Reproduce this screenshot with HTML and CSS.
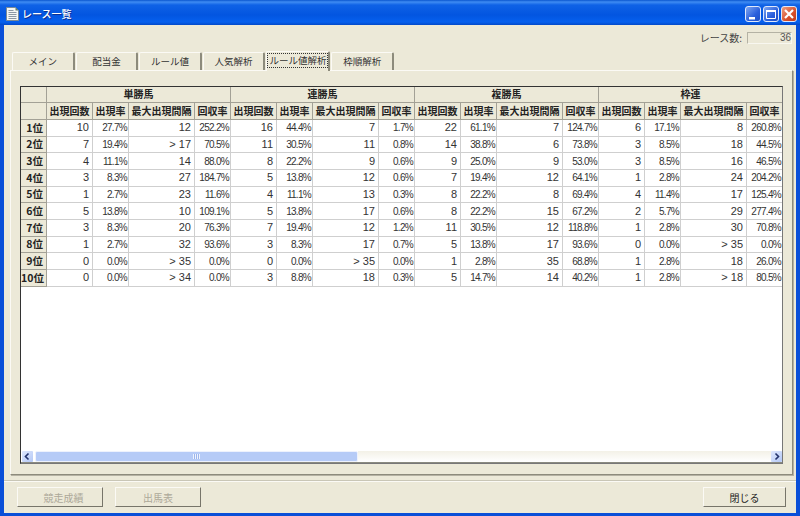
FILE: index.html
```html
<!DOCTYPE html>
<html lang="ja">
<head>
  <meta charset="UTF-8">
  <title>レース一覧</title>
  <link rel="stylesheet" href="styles.css">
</head>
<body>
  <div class="window">
    <div class="titlebar">
      <svg class="app-icon" width="13" height="14" viewBox="0 0 13 14">
        <path d="M0.500 0.500h9l3 3v10h-12z" fill="#f4f6f4" stroke="#7a8a96"/>
        <path d="M9.500 0.500v3h3z" fill="#5f7f6a"/>
        <path d="M2.500 3.500h5M2.500 5.500h8M2.500 7.500h8M2.500 9.500h8M2.500 11.500h8" stroke="#8c98a4"/>
      </svg>
      <span class="title-text">レース一覧</span>
      <div class="caption-buttons">
        <div class="cap-btn"><svg width="16" height="16" viewBox="0 0 16 16"><path d="M4 11h6v2.500H4z" fill="#fff"/></svg></div>
        <div class="cap-btn"><svg width="16" height="16" viewBox="0 0 16 16"><path d="M3.500 4.500h9v8h-9z" fill="none" stroke="#fff"/><path d="M3 4h10v2H3z" fill="#fff"/></svg></div>
        <div class="cap-btn close"><svg width="16" height="16" viewBox="0 0 16 16"><path d="M4 4l8 8M12 4l-8 8" stroke="#fff" stroke-width="2.200"/></svg></div>
      </div>
    </div>

    <div class="client">
      <div class="status-row">
        <span class="status-label">レース数:</span>
        <div class="status-box">36</div>
      </div>

      <div class="tabs">
        <div class="tab">メイン</div>
        <div class="tab">配当金</div>
        <div class="tab">ルール値</div>
        <div class="tab">人気解析</div>
        <div class="tab active"><span class="focus">ルール値解析</span></div>
        <div class="tab">枠順解析</div>
      </div>

      <div class="panel">
        <div class="grid-box">
          <div class="grid-scroll">
            <table class="grid">
              <colgroup>
                <col class="c-head">
                <col class="c-a"><col class="c-b"><col class="c-c"><col class="c-b">
                <col class="c-a"><col class="c-b"><col class="c-c"><col class="c-b">
                <col class="c-a"><col class="c-b"><col class="c-c"><col class="c-b">
                <col class="c-a"><col class="c-b"><col class="c-c"><col class="c-b">
              </colgroup>
              <thead>
                <tr class="group-row">
                  <th></th>
                  <th colspan="4">単勝馬</th>
                  <th colspan="4">連勝馬</th>
                  <th colspan="4">複勝馬</th>
                  <th colspan="4">枠連</th>
                </tr>
                <tr class="name-row">
                  <th></th>
                  <th>出現回数</th><th>出現率</th><th>最大出現間隔</th><th>回収率</th>
                  <th>出現回数</th><th>出現率</th><th>最大出現間隔</th><th>回収率</th>
                  <th>出現回数</th><th>出現率</th><th>最大出現間隔</th><th>回収率</th>
                  <th>出現回数</th><th>出現率</th><th>最大出現間隔</th><th>回収率</th>
                </tr>
              </thead>
              <tbody>
                <tr><th>1位</th>
                  <td>10</td><td class="pct">27.7%</td><td>12</td><td class="pct">252.2%</td>
                  <td>16</td><td class="pct">44.4%</td><td>7</td><td class="pct">1.7%</td>
                  <td>22</td><td class="pct">61.1%</td><td>7</td><td class="pct">124.7%</td>
                  <td>6</td><td class="pct">17.1%</td><td>8</td><td class="pct">260.8%</td></tr>
                <tr><th>2位</th>
                  <td>7</td><td class="pct">19.4%</td><td>&gt; 17</td><td class="pct">70.5%</td>
                  <td>11</td><td class="pct">30.5%</td><td>11</td><td class="pct">0.8%</td>
                  <td>14</td><td class="pct">38.8%</td><td>6</td><td class="pct">73.8%</td>
                  <td>3</td><td class="pct">8.5%</td><td>18</td><td class="pct">44.5%</td></tr>
                <tr><th>3位</th>
                  <td>4</td><td class="pct">11.1%</td><td>14</td><td class="pct">88.0%</td>
                  <td>8</td><td class="pct">22.2%</td><td>9</td><td class="pct">0.6%</td>
                  <td>9</td><td class="pct">25.0%</td><td>9</td><td class="pct">53.0%</td>
                  <td>3</td><td class="pct">8.5%</td><td>16</td><td class="pct">46.5%</td></tr>
                <tr><th>4位</th>
                  <td>3</td><td class="pct">8.3%</td><td>27</td><td class="pct">184.7%</td>
                  <td>5</td><td class="pct">13.8%</td><td>12</td><td class="pct">0.6%</td>
                  <td>7</td><td class="pct">19.4%</td><td>12</td><td class="pct">64.1%</td>
                  <td>1</td><td class="pct">2.8%</td><td>24</td><td class="pct">204.2%</td></tr>
                <tr><th>5位</th>
                  <td>1</td><td class="pct">2.7%</td><td>23</td><td class="pct">11.6%</td>
                  <td>4</td><td class="pct">11.1%</td><td>13</td><td class="pct">0.3%</td>
                  <td>8</td><td class="pct">22.2%</td><td>8</td><td class="pct">69.4%</td>
                  <td>4</td><td class="pct">11.4%</td><td>17</td><td class="pct">125.4%</td></tr>
                <tr><th>6位</th>
                  <td>5</td><td class="pct">13.8%</td><td>10</td><td class="pct">109.1%</td>
                  <td>5</td><td class="pct">13.8%</td><td>17</td><td class="pct">0.6%</td>
                  <td>8</td><td class="pct">22.2%</td><td>15</td><td class="pct">67.2%</td>
                  <td>2</td><td class="pct">5.7%</td><td>29</td><td class="pct">277.4%</td></tr>
                <tr><th>7位</th>
                  <td>3</td><td class="pct">8.3%</td><td>20</td><td class="pct">76.3%</td>
                  <td>7</td><td class="pct">19.4%</td><td>12</td><td class="pct">1.2%</td>
                  <td>11</td><td class="pct">30.5%</td><td>12</td><td class="pct">118.8%</td>
                  <td>1</td><td class="pct">2.8%</td><td>30</td><td class="pct">70.8%</td></tr>
                <tr><th>8位</th>
                  <td>1</td><td class="pct">2.7%</td><td>32</td><td class="pct">93.6%</td>
                  <td>3</td><td class="pct">8.3%</td><td>17</td><td class="pct">0.7%</td>
                  <td>5</td><td class="pct">13.8%</td><td>17</td><td class="pct">93.6%</td>
                  <td>0</td><td class="pct">0.0%</td><td>&gt; 35</td><td class="pct">0.0%</td></tr>
                <tr><th>9位</th>
                  <td>0</td><td class="pct">0.0%</td><td>&gt; 35</td><td class="pct">0.0%</td>
                  <td>0</td><td class="pct">0.0%</td><td>&gt; 35</td><td class="pct">0.0%</td>
                  <td>1</td><td class="pct">2.8%</td><td>35</td><td class="pct">68.8%</td>
                  <td>1</td><td class="pct">2.8%</td><td>18</td><td class="pct">26.0%</td></tr>
                <tr><th>10位</th>
                  <td>0</td><td class="pct">0.0%</td><td>&gt; 34</td><td class="pct">0.0%</td>
                  <td>3</td><td class="pct">8.8%</td><td>18</td><td class="pct">0.3%</td>
                  <td>5</td><td class="pct">14.7%</td><td>14</td><td class="pct">40.2%</td>
                  <td>1</td><td class="pct">2.8%</td><td>&gt; 18</td><td class="pct">80.5%</td></tr>
              </tbody>
            </table>
          </div>
          <div class="hscroll">
            <div class="sb-btn"><svg width="11" height="11" viewBox="0 0 11 11"><path d="M6.500 2.500l-3 3 3 3" fill="none" stroke="#24346c" stroke-width="1.600"/></svg></div>
            <div class="sb-thumb"><span class="sb-grip"></span></div>
            <div class="sb-track"></div>
            <div class="sb-btn"><svg width="11" height="11" viewBox="0 0 11 11"><path d="M4.500 2.500l3 3-3 3" fill="none" stroke="#24346c" stroke-width="1.600"/></svg></div>
          </div>
        </div>
      </div>

      <div class="footer">
        <button class="btn results-btn" disabled>競走成績</button>
        <button class="btn" disabled>出馬表</button>
        <button class="btn close-btn">閉じる</button>
      </div>
    </div>
  </div>
</body>
</html>
```

FILE: styles.css
```css
html, body {
  margin: 0;
  padding: 0;
}
body {
  width: 800px;
  height: 516px;
  overflow: hidden;
  font-family: "Noto Sans CJK JP", "Liberation Sans", sans-serif;
  font-size: 10px;
  color: #222;
  background: #ece9d8;
}
.window {
  height: 516px;
  display: flex;
  flex-direction: column;
  background: #0a4fd8;
}
.titlebar {
  height: 25px;
  flex: none;
  display: flex;
  align-items: center;
  padding: 2px 3px 0 6px;
  box-sizing: border-box;
  background: linear-gradient(to bottom, #0a56cf 0, #3f8cf3 2px, #0f62e6 5px, #0355e0 15px, #0660ee 22px, #0349c8 25px);
}
.app-icon {
  flex: none;
}
.title-text {
  margin-left: 3px;
  color: #fff;
  font-size: 10px;
  font-weight: 500;
  text-shadow: 1px 1px 0 #0f2f90;
}
.caption-buttons {
  margin-left: auto;
  display: flex;
  gap: 2px;
}
.cap-btn {
  width: 16px;
  height: 16px;
  box-sizing: border-box;
  border: 1px solid #dfe8fb;
  border-radius: 3px;
  background: linear-gradient(135deg, #7fa6f0, #2a5fdc 60%, #1f4fc4);
  display: flex;
  align-items: center;
  justify-content: center;
}
.cap-btn svg {
  flex: none;
}
.cap-btn.close {
  background: linear-gradient(135deg, #ee9e80, #d8502c 60%, #c23a18);
}

.client {
  flex: 1;
  min-height: 0;
  margin: 0 4px 3px;
  display: flex;
  flex-direction: column;
  background: #ece9d8;
}
.status-row {
  height: 27px;
  flex: none;
  display: flex;
  align-items: flex-start;
  justify-content: flex-end;
  padding: 7px 4px 0 0;
  box-sizing: border-box;
}
.status-label {
  margin-right: 5px;
  line-height: 11px;
  color: #444;
}
.status-box {
  width: 45px;
  height: 12px;
  box-sizing: border-box;
  border: 1px solid;
  border-color: #b4b2a4 #f8f7f0 #f8f7f0 #b4b2a4;
  font-family: "Liberation Sans", sans-serif;
  line-height: 10px;
  text-align: right;
  color: #555;
}

.tabs {
  height: 18px;
  flex: none;
  display: flex;
  gap: 1px;
  padding-left: 8px;
}
.tab {
  width: 62.600px;
  height: 18px;
  box-sizing: border-box;
  border: 1px solid #fbfaf5;
  border-right: 2px solid #8d8b7c;
  border-bottom: none;
  border-radius: 2px 2px 0 0;
  display: flex;
  align-items: center;
  justify-content: center;
  padding-bottom: 2px;
  font-size: 9.500px;
  color: #333;
}
.tab.active {
  width: 64px;
  height: 20px;
  margin-top: -1px;
  margin-bottom: -1px;
  position: relative;
  background: #ece9d8;
}
.focus {
  border: 1px dotted #333;
  line-height: 13px;
  padding: 0 1px;
  white-space: nowrap;
}

.panel {
  height: 405px;
  flex: none;
  margin: 0 3px 0 6px;
  padding: 15px 9px 10px;
  box-sizing: border-box;
  border: 1px solid;
  border-color: #fbfaf5 #8d8b7c #8d8b7c #fbfaf5;
  box-shadow: 1px 1px 0 #b5b2a3;
}
.grid-box {
  height: 378px;
  box-sizing: border-box;
  border: 1px solid;
  border-color: #333 #777 #777 #333;
  background: #fff;
  display: flex;
  flex-direction: column;
}
.grid-scroll {
  flex: 1;
  min-height: 0;
  overflow: hidden;
}
.grid {
  table-layout: fixed;
  width: 762px;
  border-collapse: separate;
  border-spacing: 0;
}
.c-head { width: 26px; }
.c-a { width: 46px; }
.c-b { width: 36px; }
.c-c { width: 66px; }
.grid th {
  background: #ece9d8;
  box-sizing: border-box;
  padding: 0 0 2px;
  border-right: 1px solid #a3a196;
  border-bottom: 1px solid #a3a196;
  font-weight: 700;
  font-size: 10px;
  color: #222;
  white-space: nowrap;
  overflow: hidden;
  line-height: 13px;
}
.group-row th {
  height: 16px;
}
.name-row th {
  height: 17px;
}
.grid tbody th {
  height: 16.670px;
  text-align: right;
  padding: 0 3px 1px 0;
  font-size: 10.500px;
}
.grid td {
  box-sizing: border-box;
  padding: 0 3px 0 0;
  height: 16.670px;
  border-right: 1px solid #cfcfcf;
  border-bottom: 1px solid #cfcfcf;
  text-align: right;
  font-family: "Liberation Sans", sans-serif;
  font-size: 11px;
  line-height: 13px;
  color: #333;
  white-space: nowrap;
}
.grid td.pct {
  font-size: 10px;
  letter-spacing: -0.700px;
  padding-right: 1px;
}

.hscroll {
  height: 11px;
  flex: none;
  display: flex;
  padding: 0 0 0 1px;
  border-bottom: 1px solid #8b8b80;
  box-sizing: content-box;
  background: #fff;
}
.sb-btn {
  width: 11px;
  height: 11px;
  flex: none;
  background: linear-gradient(135deg, #dfe8fd, #b4c8f6);
  border-radius: 1px;
}
.sb-btn svg {
  display: block;
}
.sb-thumb {
  width: 323px;
  flex: none;
  margin-left: 2px;
  box-sizing: border-box;
  border: 1px solid #eef2fd;
  border-radius: 2px;
  background: #b6cbf7;
  display: flex;
  align-items: center;
  justify-content: center;
}
.sb-grip {
  width: 7px;
  height: 5px;
  background: repeating-linear-gradient(to right, #eef3fe 0, #eef3fe 1px, #9db5ec 1px, #9db5ec 2px);
}
.sb-track {
  flex: 1;
  background: linear-gradient(to bottom, #f3f1e7, #fff);
}

.footer {
  flex: 1;
  margin-top: 5px;
  border-top: 1px solid #c9c6b6;
  box-shadow: inset 0 1px 0 #fbfaf5;
  display: flex;
  gap: 12px;
  padding: 6px 10px 0 13px;
}
.btn {
  width: 86px;
  height: 20px;
  padding: 0;
  box-sizing: border-box;
  border: 1px solid;
  border-color: #fbfaf5 #77756a #77756a #fbfaf5;
  background: #ece9d8;
  font-family: "Noto Sans CJK JP", sans-serif;
  font-size: 10px;
  color: #222;
}
.btn:disabled {
  color: #aca899;
}
.results-btn {
  padding-left: 7px;
}
.close-btn {
  width: 83px;
  margin-left: auto;
}
```
